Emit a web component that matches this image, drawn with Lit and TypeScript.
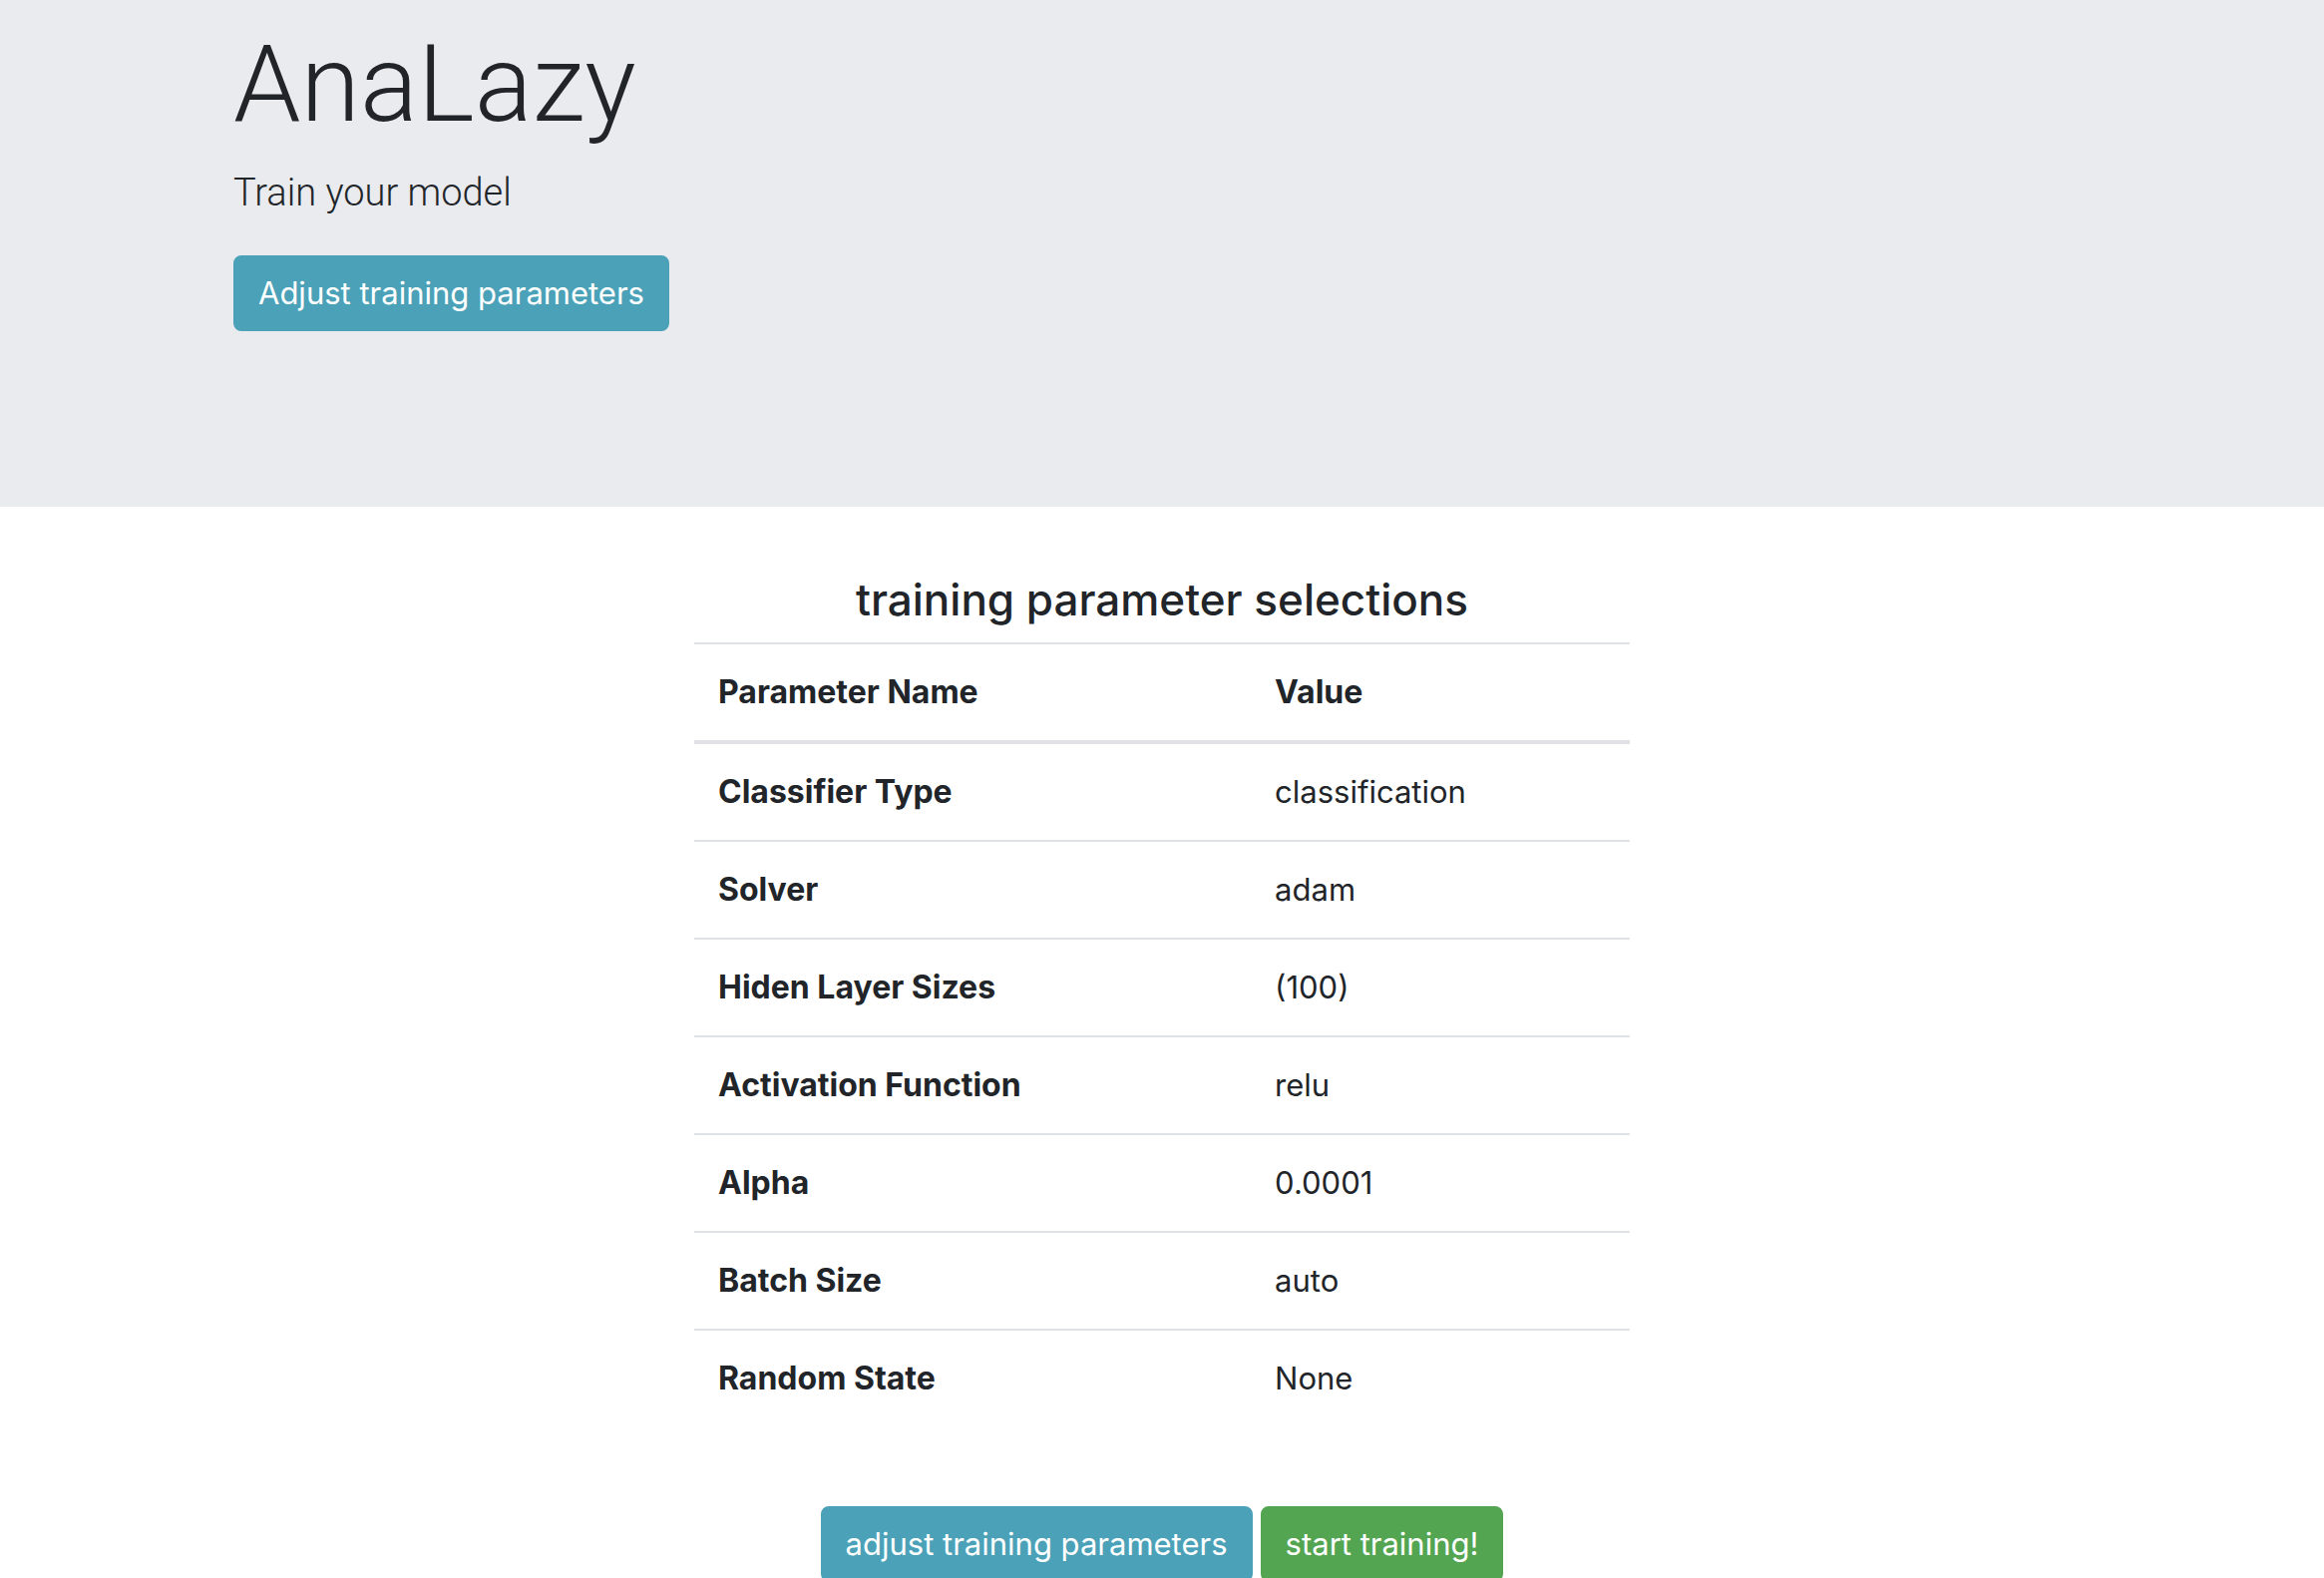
import { LitElement, html, css } from "lit";
import { customElement } from "lit/decorators.js";

interface Parameter {
  name: string;
  value: string;
}

const PARAMETERS: Parameter[] = [
  { name: "Classifier Type", value: "classification" },
  { name: "Solver", value: "adam" },
  { name: "Hiden Layer Sizes", value: "(100)" },
  { name: "Activation Function", value: "relu" },
  { name: "Alpha", value: "0.0001" },
  { name: "Batch Size", value: "auto" },
  { name: "Random State", value: "None" },
];

@customElement("app-root")
export class AppRoot extends LitElement {
  static styles = css`
    :host {
      display: block;
      background: #fff;
      color: #212529;
      font-family: Inter, "Liberation Sans", sans-serif;
      font-size: 31px;
      line-height: 48px;
    }
    .hero {
      padding: 17px 0 176px;
      background: #eaebef;
    }
    .container {
      box-sizing: border-box;
      max-width: 1920px;
      margin: 0 auto;
      padding: 0 29px;
    }
    .title,
    .lead {
      font-family: Roboto, "Liberation Sans", sans-serif;
      font-weight: 300;
    }
    .title {
      margin: 0 0 12px;
      font-size: 108px;
      line-height: 134px;
    }
    .lead {
      margin: 0 0 33px;
      font-size: 38px;
      line-height: 60px;
    }
    .btn {
      box-sizing: border-box;
      padding: 12px 23px;
      border: 2px solid transparent;
      border-radius: 8px;
      color: #fff;
      font: inherit;
      cursor: pointer;
    }
    .hero .btn {
      display: block;
    }
    .info {
      background-color: #4ba1b7;
      border-color: #4ba1b7;
    }
    .success {
      background-color: #53a551;
      border-color: #53a551;
    }
    .selections {
      max-width: 938px;
      margin: 0 auto;
      padding: 64px 0;
    }
    .heading {
      margin: 0 0 14px;
      font-size: 44px;
      font-weight: 500;
      line-height: 58px;
      text-align: center;
    }
    .params {
      width: 100%;
      border-collapse: collapse;
      table-layout: fixed;
    }
    .name-col {
      width: 59.5%;
    }
    .params th,
    .params td {
      padding: 24px;
      border-top: 2px solid #dfe2e6;
      text-align: left;
      vertical-align: top;
    }
    .params th {
      font-size: 32px;
      font-weight: 700;
    }
    .params thead th {
      border-bottom: 4px solid #dfe1e7;
    }
    .actions {
      display: flex;
      flex-wrap: wrap;
      justify-content: center;
      gap: 8px;
      padding-top: 80px;
    }
  `;

  render() {
    return html`
      <header class="hero">
        <div class="container">
          <h1 class="title">AnaLazy</h1>
          <p class="lead">Train your model</p>
          <button class="btn info" type="button">Adjust training parameters</button>
        </div>
      </header>
      <main class="selections">
        <h2 class="heading" id="selections-heading">training parameter selections</h2>
        <table class="params" aria-labelledby="selections-heading">
          <colgroup>
            <col class="name-col" />
            <col />
          </colgroup>
          <thead>
            <tr>
              <th scope="col">Parameter Name</th>
              <th scope="col">Value</th>
            </tr>
          </thead>
          <tbody>
            ${PARAMETERS.map(
              (p) => html`<tr>
                <th scope="row">${p.name}</th>
                <td>${p.value}</td>
              </tr>`
            )}
          </tbody>
        </table>
        <div class="actions">
          <button class="btn info" type="button">adjust training parameters</button>
          <button class="btn success" type="button">start training!</button>
        </div>
      </main>
    `;
  }
}
